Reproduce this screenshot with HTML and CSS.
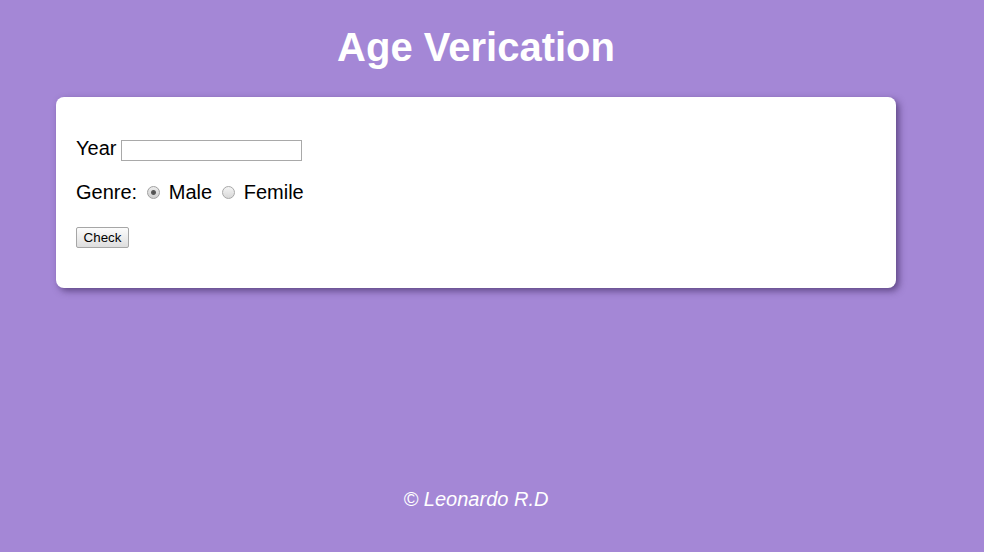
FILE: index.html
```html
<!DOCTYPE html>
<html lang="en">
<head>
<meta charset="utf-8">
<title>Age Verication</title>
<link rel="stylesheet" href="styles.css">
</head>
<body>
<div class="wrap">
  <h1 class="title">Age Verication</h1>
  <form class="card">
    <div class="row row-year">Year <input type="text" class="text-input"></div>
    <div class="row row-genre">Genre: <input type="radio" name="g" class="radio" checked> Male <input type="radio" name="g" class="radio"> Femile</div>
    <div class="actions"><button type="button" class="btn">Check</button></div>
  </form>
  <footer class="footer">© Leonardo R.D</footer>
</div>
</body>
</html>
```

FILE: styles.css
```css
html, body {
  margin: 0;
  padding: 0;
}
body {
  background: #a487d6;
  font-family: "Liberation Sans", Arial, sans-serif;
  color: #000;
  width: 984px;
  height: 552px;
  overflow: hidden;
}
.wrap {
  width: 840px;
  margin-left: 56px;
  display: flex;
  flex-direction: column;
}
.title {
  margin: 0;
  padding-top: 24px;
  font-size: 40px;
  line-height: 46px;
  font-weight: bold;
  color: #fff;
  text-align: center;
}
.card {
  margin: 27px 0 0;
  background: #fff;
  border-radius: 8px;
  box-shadow: 3px 3px 7px rgba(40, 20, 70, 0.55);
  padding: 40px 20px 40px;
  display: flex;
  flex-direction: column;
}
.row {
  font-size: 20px;
  line-height: normal;
}
.row-genre {
  margin-top: 20px;
}
.text-input {
  box-sizing: border-box;
  width: 181px;
  height: 21px;
  margin: 0 0 0 -1px;
  padding: 1px 2px;
  border: 1px solid #a9a9a9;
  font-family: "Liberation Sans", Arial, sans-serif;
  font-size: 13.33px;
  vertical-align: baseline;
  background: #fff;
}
.radio {
  appearance: none;
  -webkit-appearance: none;
  box-sizing: border-box;
  width: 13px;
  height: 13px;
  margin: 3px 3px 0 4.5px;
  border: 1px solid #a8a8a8;
  border-radius: 50%;
  background: linear-gradient(#f4f4f4, #d8d8d8);
  vertical-align: baseline;
}
.radio:checked {
  background: radial-gradient(circle, #4f4f4f 0, #5a5a5a 2px, rgba(90,90,90,0) 3px), linear-gradient(#ececec, #cfcfcf);
  border-color: #a0a0a0;
}
.actions {
  margin-top: 23px;
  display: flex;
}
.btn {
  box-sizing: border-box;
  width: 53px;
  height: 21px;
  margin: 0;
  padding: 1px 6px;
  border: 1px solid #a6a6a6;
  border-radius: 2px;
  background: linear-gradient(#fcfcfc, #dedede);
  font-family: "Liberation Sans", Arial, sans-serif;
  font-size: 13.33px;
  color: #000;
}
.footer {
  margin-top: 200px;
  font-size: 20px;
  line-height: normal;
  font-style: italic;
  color: #fff;
  text-align: center;
}
```
